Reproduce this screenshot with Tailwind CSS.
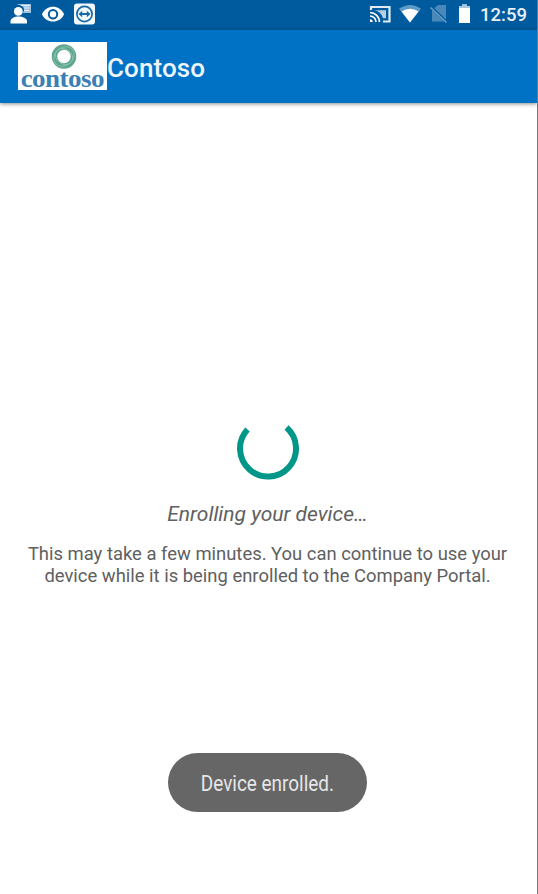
<!DOCTYPE html>
<html lang="en">
<head>
<meta charset="utf-8">
<title>Contoso</title>
<script src="https://cdn.jsdelivr.net/npm/@tailwindcss/browser@4"></script>
</head>
<body class="bg-white">
<div class="relative flex h-[894px] w-[538px] flex-col overflow-hidden border-r border-[#777] bg-white font-['Roboto','Noto_Sans',sans-serif]">
  <!-- Status bar -->
  <div class="flex h-[30px] shrink-0 justify-between bg-[#005a9e]">
    <svg class="h-[30px] w-[110px]" viewBox="0 0 110 30" fill="none">
      <path d="M17 4h14v9H22.500L24 11a5 5 0 0 0-5-6z" fill="#9fc2df"/>
      <path d="M21 5.500h9M24 8h5M24 10.500h5" stroke="#e5f0f8" stroke-width="1"/>
      <circle cx="18.300" cy="11.400" r="4.400" fill="#fff"/>
      <path d="M10.500 23.500v-2.500c0-2.500 4-4.500 8-4.500s8.500 2 8.500 4.500v2.500z" fill="#fff"/>
      <path d="M42 14.300C46 4.200 60 4.200 64 14.300C60 24 46 24 42 14.300z" fill="#fff"/>
      <circle cx="53" cy="14.300" r="4.200" fill="#fff" stroke="#005a9e" stroke-width="2"/>
      <rect x="74" y="3.500" width="21" height="21" rx="3" fill="#f2f8fc"/>
      <circle cx="84.500" cy="14" r="7.600" fill="#f2f8fc" stroke="#1769a8" stroke-width="1.700"/>
      <path d="M78.500 14l3.700-3.300v2.400h4.600v-2.400l3.700 3.300-3.700 3.300v-2.400h-4.600v2.400z" fill="#1769a8"/>
    </svg>
    <div class="flex">
      <svg class="h-[30px] w-[110px]" viewBox="365 0 110 30" fill="none">
        <path d="M371 10V7h18.500v14.500H383" stroke="#e0ebf4" stroke-width="2.200"/>
        <path d="M374 10.300h12v8h-3a10 10 0 0 0-9-8z" fill="#b5cfe3"/>
        <path d="M370 12.500a9.500 9.500 0 0 1 9.500 9.500M370 16a6 6 0 0 1 6 6" stroke="#fff" stroke-width="1.700"/>
        <path d="M370 19.300a2.700 2.700 0 0 1 2.700 2.700H370z" fill="#fff"/>
        <path d="M399 8.800Q410 1 421 8.800L410 22.500z" fill="#5e9ac7"/>
        <path d="M401.500 11.500Q410 6 418.500 11.500L410 22.500z" fill="#fff"/>
        <path d="M438 5h8v16.500H432V10z" fill="#4a88b9"/>
        <path d="M430.500 6.500L447 22.500" stroke="#005a9e" stroke-width="3"/>
        <path d="M430.500 7.500L446.500 22.500" stroke="#6aa0c9" stroke-width="1.500"/>
        <path d="M459 6h3V4.500h5V6h3v17h-11z" fill="#fff"/>
        <path d="M459 6h3V4.500h5V6h3v2h-11z" fill="#a9c8df"/>
      </svg>
      <div class="w-[62px] pl-[5px] text-[18.500px] leading-[30px] font-medium text-[#e8f1f8]">12:59</div>
    </div>
  </div>
  <!-- App bar -->
  <div class="z-10 flex h-[73px] shrink-0 items-start bg-[#0072c6] pt-[12px] pl-[18px] shadow-[0_1px_4px_rgba(0,0,0,0.45)]">
    <div class="flex h-[48px] w-[89px] flex-col items-center bg-white">
      <svg class="h-[28px] w-[28px] shrink-0" viewBox="0 0 28 28" fill="none">
        <circle cx="15" cy="14.500" r="9.500" stroke="#5ca58e" stroke-width="5.500"/>
        <ellipse cx="15" cy="14.500" rx="9.200" ry="7.500" stroke="#8fc4b1" stroke-width=".8" transform="rotate(35 15 14.500)"/>
        <ellipse cx="15" cy="14.500" rx="11" ry="9" stroke="#8fc4b1" stroke-width=".8" transform="rotate(-40 15 14.500)"/>
      </svg>
      <div class="-mt-[5px] scale-x-[1.060] font-['Liberation_Serif',serif] text-[25.500px] leading-[27px] font-bold tracking-[-0.500px] text-[#3c7fb4]">contoso</div>
    </div>
    <div class="pt-[11px] text-[26px] leading-[30px] font-medium tracking-[0.080px] text-[#eef6fc]">Contoso</div>
  </div>
  <!-- Enrollment progress -->
  <div class="flex flex-col items-center pt-[314px] pr-[2px] text-[#606060]">
    <svg class="h-[64px] w-[64px]" viewBox="0 0 64 64" fill="none">
      <path d="M11.500 12.500A28 28 0 1 0 50.500 10.500" stroke="#009688" stroke-width="6"/>
    </svg>
    <div class="mt-[19px] text-[21px] leading-[28px] italic">Enrolling your device…</div>
    <div class="mt-[15px] text-center text-[18.430px] leading-[22px] whitespace-nowrap">This may take a few minutes. You can continue to use your<br>device while it is being enrolled to the Company Portal.</div>
  </div>
  <!-- Toast -->
  <div class="absolute top-[753px] left-[168px] flex h-[59px] w-[199px] items-center justify-center rounded-full bg-[#666]">
    <span class="scale-x-[0.860] pt-px text-[22px] whitespace-nowrap text-[#e6e6e6]">Device enrolled.</span>
  </div>
</div>
</body>
</html>
